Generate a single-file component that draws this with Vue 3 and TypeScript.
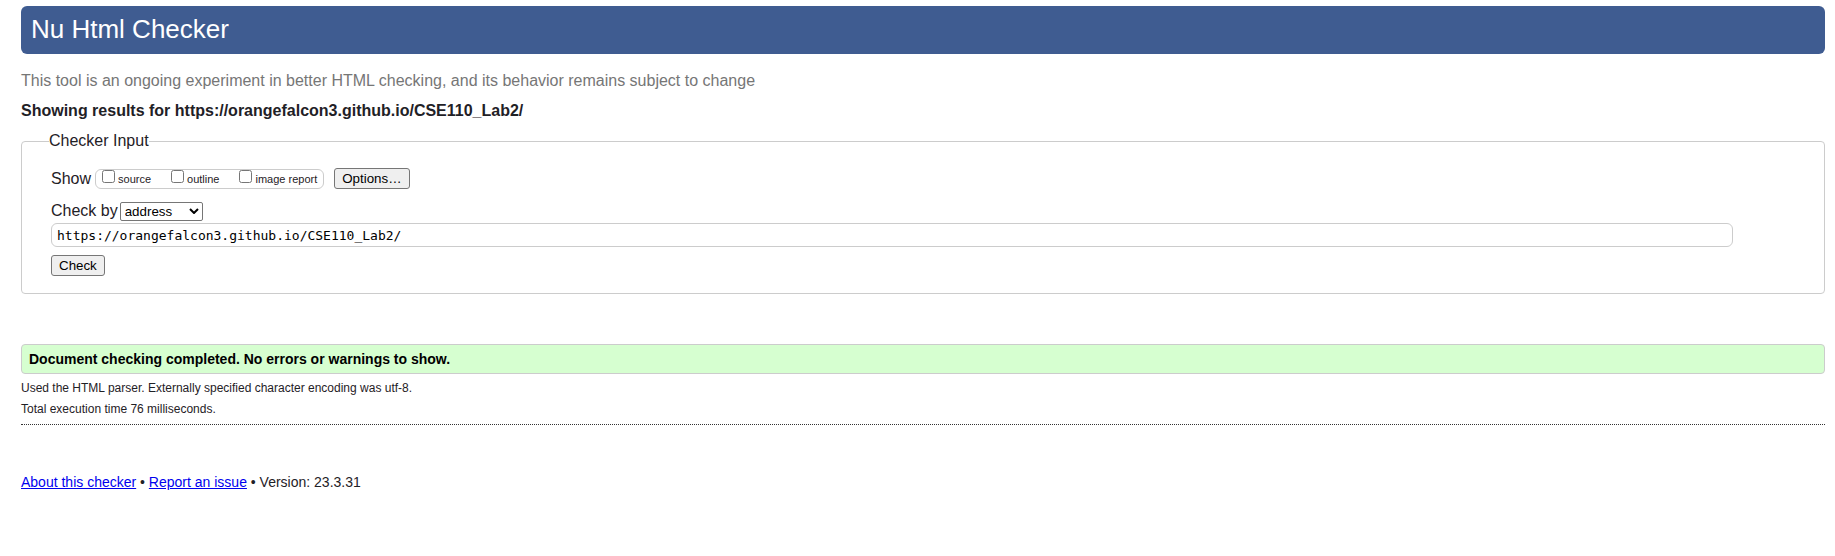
<script setup lang="ts">
import { ref } from 'vue'

interface ShowOption {
  id: string
  label: string
  checked: boolean
}

const address = ref<string>('https://orangefalcon3.github.io/CSE110_Lab2/')
const checked = ref<string>(address.value)
const method = ref<string>('address')
const showOptions = ref<ShowOption[]>([
  { id: 'show-source', label: 'source', checked: false },
  { id: 'show-outline', label: 'outline', checked: false },
  { id: 'show-image-report', label: 'image report', checked: false },
])

function check(): void {
  checked.value = address.value
}
</script>

<template>
  <div class="page">
    <header>
      <h1 class="banner">Nu Html Checker</h1>
      <p class="tagline">
        This tool is an ongoing experiment in better HTML checking, and its behavior remains subject to change
      </p>
    </header>
    <main>
      <h2 class="subject">Showing results for {{ checked }}</h2>
      <form @submit.prevent="check">
        <fieldset class="checker">
          <legend>Checker Input</legend>
          <div class="row show-row">
            <span id="show-label">Show</span>
            <div class="show-group" role="group" aria-labelledby="show-label">
              <label v-for="option in showOptions" :key="option.id" class="show-option" :for="option.id">
                <input :id="option.id" v-model="option.checked" type="checkbox" />
                <span>{{ option.label }}</span>
              </label>
            </div>
            <button class="button options" type="button">Options…</button>
          </div>
          <div class="row method-row">
            <label for="method">Check by</label>
            <div class="select-wrap">
              <select id="method" v-model="method">
                <option value="address">address</option>
                <option value="file">file upload</option>
                <option value="text">text input</option>
              </select>
              <svg class="chevron" viewBox="0 0 10 6" aria-hidden="true">
                <path d="M1 1l4 4 4-4" fill="none" stroke="#000" stroke-width="2" />
              </svg>
            </div>
          </div>
          <input v-model="address" class="address" type="text" aria-label="Address" spellcheck="false" />
          <button class="button" type="submit">Check</button>
        </fieldset>
      </form>
      <section class="results">
        <p class="success">Document checking completed. No errors or warnings to show.</p>
        <p class="detail">Used the HTML parser. Externally specified character encoding was utf-8.</p>
        <p class="detail">Total execution time 76 milliseconds.</p>
      </section>
    </main>
    <footer>
      <a href="#about">About this checker</a> • <a href="#issues">Report an issue</a> • Version: 23.3.31
    </footer>
  </div>
</template>

<style>
body {
  margin: 0;
  background: #fff;
}
</style>

<style scoped>
.page {
  padding: 6px 10px 60px 21px;
  font-family: "Liberation Sans", Arial, sans-serif;
  font-size: 16px;
  line-height: 20px;
  color: #1f2126;
}

.page * {
  box-sizing: border-box;
}

h1,
h2,
p {
  margin: 0;
}

.banner {
  padding: 7px 10px 9px;
  border-radius: 6px;
  background: #3f5c91;
  color: #fff;
  font-size: 26px;
  font-weight: 400;
  line-height: 32px;
}

.tagline {
  margin-top: 17px;
  color: #767676;
}

.subject {
  margin-top: 10px;
  font-size: 16px;
  font-weight: 700;
}

.checker {
  min-width: 0;
  margin: 10px 0 0;
  padding: 17px 91px 17px 29px;
  border: 1px solid #ccc;
  border-radius: 4px;
}

.checker legend {
  margin-left: -2px;
  padding: 0;
}

.row {
  display: flex;
  align-items: center;
}

.show-group {
  display: flex;
  gap: 20px;
  margin-left: 4px;
  padding: 0 6px;
  border: 1px solid #ccc;
  border-radius: 6px;
}

.show-option {
  display: flex;
  gap: 3px;
  font-size: 11px;
  line-height: 18px;
}

.show-option input {
  width: 13px;
  height: 13px;
  margin: 0;
}

.button {
  display: block;
  height: 21px;
  padding: 0 7px;
  border: 1px solid #767676;
  border-radius: 3px;
  background: #efefef;
  color: #000;
  font-family: inherit;
}

.options {
  margin-left: 10px;
}

.method-row {
  margin-top: 12px;
}

.select-wrap {
  display: grid;
  align-items: center;
  margin-left: 2px;
}

.select-wrap select {
  grid-area: 1 / 1;
  width: 83px;
  height: 19px;
  padding: 0 4px;
  appearance: none;
  border: 1px solid #767676;
  border-radius: 2px;
  background: #fff;
  color: #000;
  font-family: inherit;
}

.chevron {
  grid-area: 1 / 1;
  justify-self: end;
  width: 10px;
  height: 6px;
  margin-right: 4px;
  pointer-events: none;
}

.address {
  display: block;
  width: 100%;
  height: 24px;
  margin: 2px 0 8px;
  padding: 0 5px;
  border: 1px solid #ccc;
  border-radius: 6px;
  background: #fff;
  color: #000;
  font-family: "DejaVu Sans Mono", Menlo, monospace;
  font-size: 13px;
  line-height: 20px;
}

.results {
  margin-top: 50px;
  padding-bottom: 4px;
  border-bottom: 1px dotted #333;
}

.success {
  margin-bottom: 4px;
  padding: 4px 7px;
  border: 1px solid #ccc;
  border-radius: 4px;
  background: #d6ffd0;
  color: #000;
  font-size: 14px;
  font-weight: 700;
}

.detail {
  font-size: 12px;
  line-height: 21px;
}

footer {
  margin-top: 47px;
  font-size: 14px;
}

footer a {
  color: #00e;
}
</style>
